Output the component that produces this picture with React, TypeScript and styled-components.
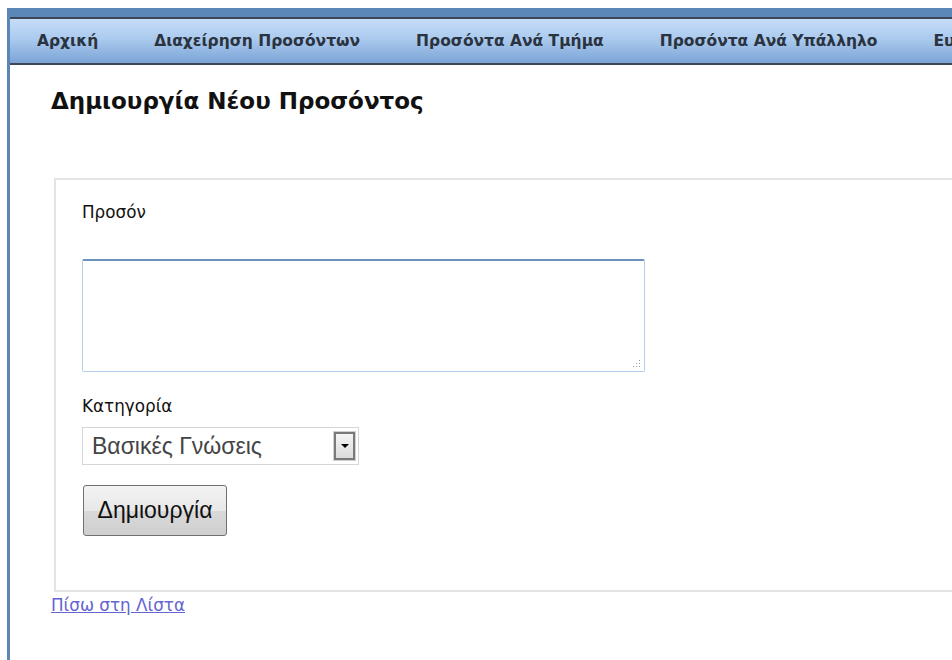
import * as React from 'react'
import styled, {createGlobalStyle} from 'styled-components'

const GlobalStyle = createGlobalStyle `
  html, body {
    margin: 0;
    padding: 0;
    background: #fff;
    overflow: hidden;
  }
  body {
    font-family: "DejaVu Sans", Verdana, sans-serif;
  }
`

const Page = styled.div `
  padding: 8px 0 0 7px;
  width: 1200px;
`

const Frame = styled.div `
  border-left: 3px solid #5b87b6;
  border-top: 9px solid #5b87b6;
  min-height: 660px;
`

const Menu = styled.ul `
  display: flex;
  margin: 0;
  padding: 0 0 0 27px;
  list-style: none;
  height: 44px;
  align-items: center;
  gap: 56px;
  border-top: 2px solid #3d4654;
  border-bottom: 2px solid #3d4654;
  background: linear-gradient(#c5ddf8 0%, #abcaee 45%, #7ba4d6 100%);
`

const MenuItem = styled.li `
  font-family: Tahoma, "DejaVu Sans", sans-serif;
  font-size: 15.5px;
  font-weight: bold;
  color: #2b3340;
  white-space: nowrap;
`

const Main = styled.div `
  padding: 23px 0 0 41px;
`

const Title = styled.h2 `
  margin: 0 0 64px;
  font-size: 23px;
  font-weight: bold;
  color: #111;
`

const FieldSet = styled.fieldset `
  margin: 0 0 0 3px;
  width: 1000px;
  padding: 22px 26px 54px;
  border: 2px solid #e4e4e4;
  box-sizing: border-box;
`

const Label = styled.div < {gap: number} > `
  font-size: 16.8px;
  color: #111;
  margin-bottom: ${p => p.gap}px;
`

const TextBox = styled.div `
  position: relative;
  width: 563px;
  margin-bottom: 24px;
`

const TextArea = styled.textarea `
  display: block;
  width: 100%;
  height: 113px;
  box-sizing: border-box;
  border: 1px solid #b3cfec;
  border-top: 2px solid #6c93bd;
  border-radius: 2px;
  resize: none;
`

// dotted resize grip in the lower right corner
const Grip = styled.svg `
  position: absolute;
  right: 4px;
  bottom: 4px;
`

const Select = styled.div `
  display: flex;
  align-items: center;
  justify-content: space-between;
  width: 277px;
  height: 38px;
  box-sizing: border-box;
  border: 1px solid #d6d6d6;
  padding: 0 3px 0 9px;
  font-family: "Liberation Sans", Arial, sans-serif;
  font-size: 23px;
  color: #444;
  margin-bottom: 20px;
`

const DropButton = styled.span `
  display: flex;
  align-items: center;
  justify-content: center;
  width: 21px;
  height: 28px;
  box-sizing: border-box;
  border: 2px solid #7a7a7a;
  outline: 1px solid #d0d0d0;
  background: linear-gradient(#f4f4f4, #dcdcdc);
`

const Arrow = styled.span `
  width: 0;
  height: 0;
  border-left: 4px solid transparent;
  border-right: 4px solid transparent;
  border-top: 4px solid #000;
`

const Button = styled.button `
  width: 144px;
  height: 51px;
  margin-left: 1px;
  border: 1px solid #707070;
  border-radius: 3px;
  background: linear-gradient(#f3f3f3 0%, #e8e8e8 50%, #d9d9d9 51%, #cfcfcf 100%);
  font-family: "Liberation Sans", Arial, sans-serif;
  font-size: 23px;
  color: #111;
  padding: 0;
`

const BackLink = styled.a `
  display: inline-block;
  margin-top: 3px;
  font-size: 16.8px;
  color: #6464d4;
  text-decoration: underline;
`

const menu = ['Αρχική', 'Διαχείρηση Προσόντων', 'Προσόντα Ανά Τμήμα', 'Προσόντα Ανά Υπάλληλο', 'Ευρετήριο']

export default function App() {
  return (
    <React.Fragment>
      <GlobalStyle/>
      <Page>
        <Frame>
          <Menu>
            {menu.map(m => <MenuItem key={m}>{m}</MenuItem>)}
          </Menu>
          <Main>
            <Title>Δημιουργία Νέου Προσόντος</Title>
            <FieldSet>
              <Label gap={37}>Προσόν</Label>
              <TextBox>
                <TextArea/>
                <Grip width="9" height="9" viewBox="0 0 9 9">
                  {[[7, 1], [4, 4], [7, 4], [1, 7], [4, 7], [7, 7]].map(([x, y]) => (
                    <rect key={`${x}-${y}`} x={x} y={y} width="1" height="1" fill="#9a9a9a"/>
                  ))}
                </Grip>
              </TextBox>
              <Label gap={11}>Κατηγορία</Label>
              <Select>
                Βασικές Γνώσεις
                <DropButton><Arrow/></DropButton>
              </Select>
              <Button>Δημιουργία</Button>
            </FieldSet>
            <BackLink href="#">Πίσω στη Λίστα</BackLink>
          </Main>
        </Frame>
      </Page>
    </React.Fragment>
  )
}
